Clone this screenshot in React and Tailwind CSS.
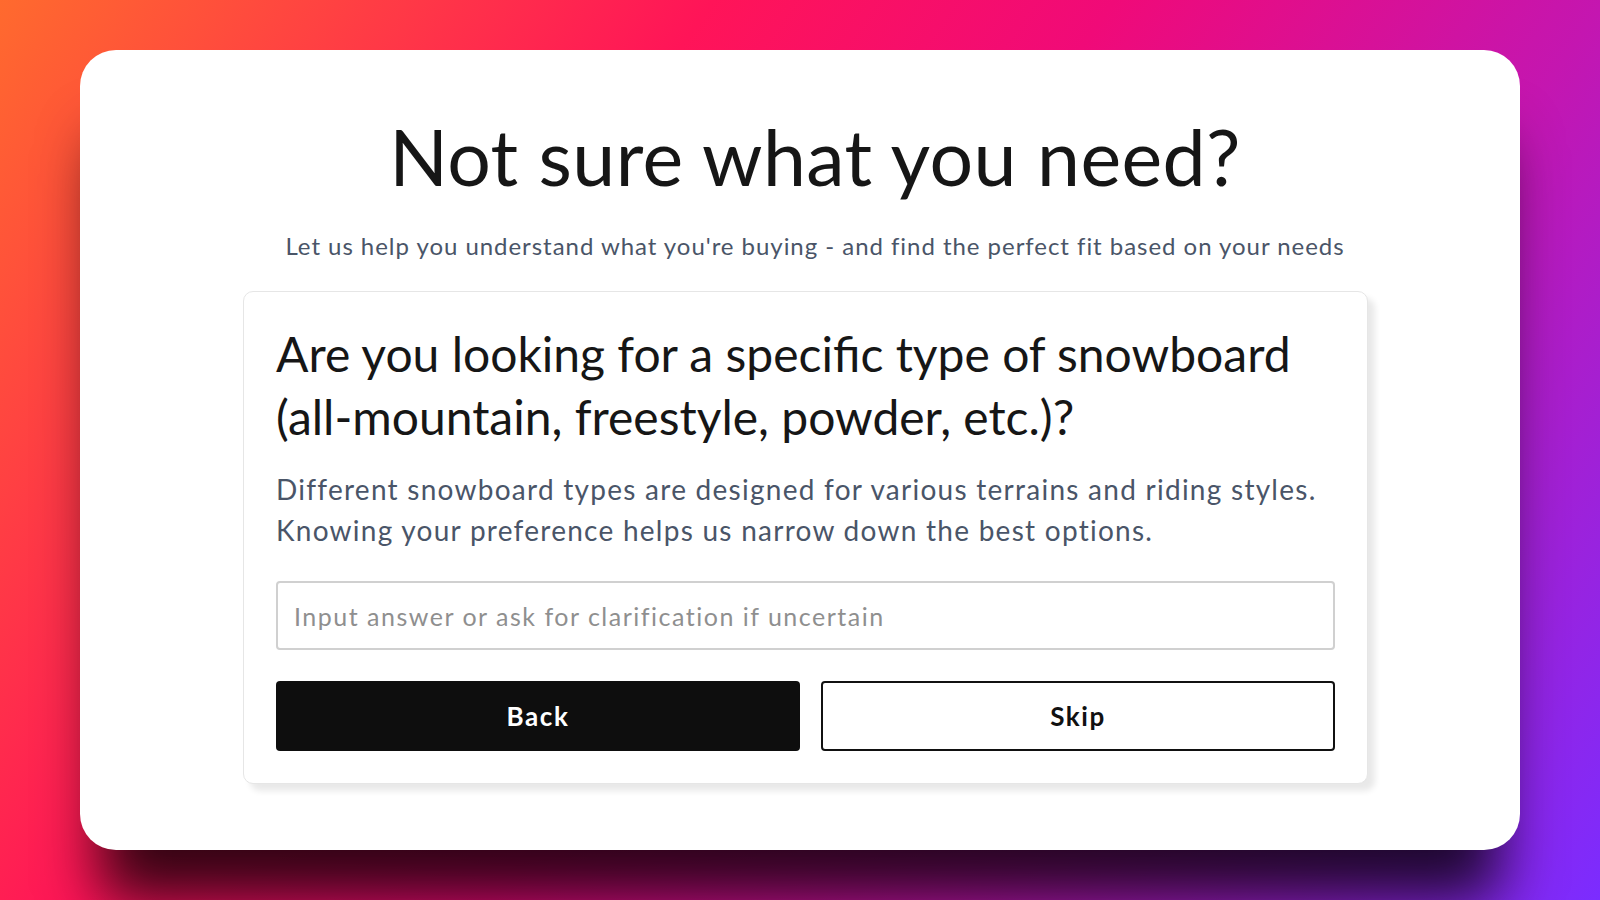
export default function App() {
  return (
    <div className="w-[1600px] h-[900px] overflow-hidden bg-[linear-gradient(125deg,#ff6a2e_0%,#ff1458_32%,#f00a78_50%,#c416b0_72%,#7b2cff_100%)] pt-[50px] px-[80px] font-['Lato','Liberation_Sans',sans-serif]">
      <div className="h-[800px] bg-white rounded-[36px] shadow-[0_70px_60px_-20px_rgba(0,0,0,0.8)] pt-[61px]">
        <div className="pl-[30px] text-center">
          <h1 className="text-[77px] leading-[91px] tracking-[0.005em] text-[#161616] font-normal">
            Not sure what you need?
          </h1>
          <p className="mt-[28px] text-[24px] leading-[32px] tracking-[0.04em] text-[#4a5568]">
            Let us help you understand what you're buying - and find the perfect fit based on your needs
          </p>
        </div>

        <div className="mt-[29px] ml-[163px] w-[1125px] bg-white border border-[#e6e6e6] rounded-[10px] shadow-[7px_7px_6px_rgba(0,0,0,0.09)] px-8 pt-[30px] pb-8">
          <h2 className="text-[48px] leading-[63px] text-[#161616] font-normal">
            Are you looking for a specific type of snowboard (all-mountain, freestyle, powder, etc.)?
          </h2>
          <p className="mt-[21px] text-[28px] leading-[41px] tracking-[0.045em] text-[#4a5568]">
            Different snowboard types are designed for various terrains and riding styles. Knowing your preference helps us narrow down the best options.
          </p>
          <input
            type="text"
            placeholder="Input answer or ask for clarification if uncertain"
            className="mt-[30px] w-full h-[69px] border-2 border-[#d0d0d0] rounded-[4px] px-4 text-[25px] tracking-[0.06em] text-[#222] placeholder:text-[#8f8f8f] outline-none"
          />
          <div className="mt-[31px] flex gap-[21px]">
            <button className="w-[524px] h-[70px] bg-[#0e0e0e] text-white rounded-[4px] text-[26px] font-bold tracking-[0.06em]">
              Back
            </button>
            <button className="flex-1 h-[70px] bg-white text-[#111] border-2 border-[#111] rounded-[4px] text-[26px] font-bold tracking-[0.06em]">
              Skip
            </button>
          </div>
        </div>
      </div>
    </div>
  );
}
